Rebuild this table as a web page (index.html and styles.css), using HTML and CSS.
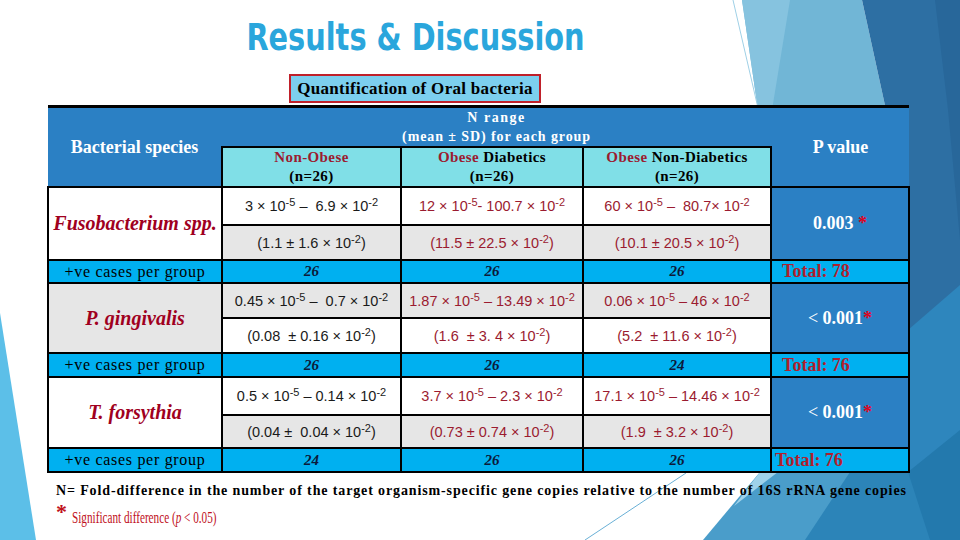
FILE: index.html
```html
<!DOCTYPE html>
<html>
<head>
<meta charset="utf-8">
<title>Results &amp; Discussion</title>
<link rel="stylesheet" href="styles.css">
</head>
<body>
<div class="slide">
  <svg class="bg" viewBox="0 0 960 540" preserveAspectRatio="none" aria-hidden="true">
    <polygon points="0,313 36,540 0,540" fill="#5cbfe8"/>
    <polygon points="742,0 862,0 886,110 758,110" fill="#71b6d6"/>
    <polygon points="742,0 790,0 772,110 758,110" fill="#86c3df"/>
    <polygon points="862,0 960,0 960,472 908,472 908,110 886,110" fill="#2d6fa3"/>
    <polygon points="935,0 960,0 960,240 948,110" fill="#28679a"/>
    <polygon points="908,330 960,285 960,472 908,472" fill="#2e86bd"/>
    <polygon points="703,540 760,472 960,472 960,540" fill="#4a9dca"/>
    <polygon points="805,540 850,472 960,472 960,540" fill="#2c84b8"/>
    <polygon points="908,472 960,430 960,540 930,540" fill="#2379ad"/>
    <polygon points="734,506 760,472 778,472" fill="#9fd2ea"/>
    <line x1="733" y1="0" x2="758" y2="108" stroke="#9fd0e6" stroke-width="1"/>
    <line x1="686" y1="473" x2="585" y2="540" stroke="#69b0d6" stroke-width="1"/>
  </svg>

  <main class="content">
    <header class="head">
      <h1 class="title"><span class="title-text">Results &amp; Discussion</span></h1>
      <div class="caption">Quantification of Oral bacteria</div>
    </header>

    <table class="tbl">
      <colgroup>
        <col class="c1"><col class="c2"><col class="c3"><col class="c4"><col class="c5">
      </colgroup>
      <thead>
        <tr class="hr1">
          <th rowspan="2" class="hd">Bacterial species</th>
          <th colspan="3" class="hd nr"><span class="spaced">N range</span><br>(mean ± SD) for each group</th>
          <th rowspan="2" class="hd">P value</th>
        </tr>
        <tr class="hr2">
          <th class="sub"><span class="red">Non-Obese</span><br>(n=26)</th>
          <th class="sub"><span class="red">Obese</span> Diabetics<br>(n=26)</th>
          <th class="sub"><span class="red">Obese</span> Non-Diabetics<br>(n=26)</th>
        </tr>
      </thead>
      <tbody>
        <tr class="ra">
          <td rowspan="2" class="sp white">Fusobacterium spp.</td>
          <td class="v white">3 × 10<sup>-5</sup> –&nbsp; 6.9 × 10<sup>-2</sup></td>
          <td class="v white dr">12 × 10<sup>-5</sup>- 100.7 × 10<sup>-2</sup></td>
          <td class="v white dr">60 × 10<sup>-5</sup> –&nbsp; 80.7× 10<sup>-2</sup></td>
          <td rowspan="2" class="pv"><b>0.003</b> <span class="star">*</span></td>
        </tr>
        <tr class="rb">
          <td class="v grey">(1.1 ± 1.6 × 10<sup>-2</sup>)</td>
          <td class="v grey dr">(11.5 ± 22.5 × 10<sup>-2</sup>)</td>
          <td class="v grey dr">(10.1 ± 20.5 × 10<sup>-2</sup>)</td>
        </tr>
        <tr class="rp1">
          <td class="pos">+ve cases per group</td>
          <td class="n">26</td><td class="n">26</td><td class="n">26</td>
          <td class="tot">Total: 78</td>
        </tr>

        <tr class="ra2">
          <td rowspan="2" class="sp grey">P. gingivalis</td>
          <td class="v grey">0.45 × 10<sup>-5</sup> –&nbsp; 0.7 × 10<sup>-2</sup></td>
          <td class="v grey dr">1.87 × 10<sup>-5</sup> – 13.49 × 10<sup>-2</sup></td>
          <td class="v grey dr">0.06 × 10<sup>-5</sup> – 46 × 10<sup>-2</sup></td>
          <td rowspan="2" class="pv">&lt; <b>0.001</b><span class="star">*</span></td>
        </tr>
        <tr class="rb">
          <td class="v white">(0.08&nbsp; ± 0.16 × 10<sup>-2</sup>)</td>
          <td class="v white dr">(1.6&nbsp; ± 3. 4 × 10<sup>-2</sup>)</td>
          <td class="v white dr">(5.2&nbsp; ± 11.6 × 10<sup>-2</sup>)</td>
        </tr>
        <tr class="rp">
          <td class="pos">+ve cases per group</td>
          <td class="n">26</td><td class="n">26</td><td class="n">24</td>
          <td class="tot">Total: 76</td>
        </tr>

        <tr class="ra3">
          <td rowspan="2" class="sp white">T. forsythia</td>
          <td class="v white">0.5 × 10<sup>-5</sup> – 0.14 × 10<sup>-2</sup></td>
          <td class="v white dr">3.7 × 10<sup>-5</sup> – 2.3 × 10<sup>-2</sup></td>
          <td class="v white dr">17.1 × 10<sup>-5</sup> – 14.46 × 10<sup>-2</sup></td>
          <td rowspan="2" class="pv">&lt; <b>0.001</b><span class="star">*</span></td>
        </tr>
        <tr class="rb3">
          <td class="v grey">(0.04 ±&nbsp; 0.04 × 10<sup>-2</sup>)</td>
          <td class="v grey dr">(0.73 ± 0.74 × 10<sup>-2</sup>)</td>
          <td class="v grey dr">(1.9&nbsp; ± 3.2 × 10<sup>-2</sup>)</td>
        </tr>
        <tr class="rp3">
          <td class="pos">+ve cases per group</td>
          <td class="n">24</td><td class="n">26</td><td class="n">26</td>
          <td class="tot tight">Total: 76</td>
        </tr>
      </tbody>
    </table>

    <p class="note">N= Fold-difference in the number of the target organism-specific gene copies relative to the number of 16S rRNA gene copies</p>
    <p class="sig"><span class="bigstar">*</span><span class="sig-text">Significant difference (<i>p</i> &lt; 0.05)</span></p>
  </main>
</div>
</body>
</html>
```

FILE: styles.css
```css
html, body {
  margin: 0;
  padding: 0;
  background: #fff;
}

.slide {
  position: relative;
  width: 960px;
  height: 540px;
  overflow: hidden;
  background: #fff;
}

.bg {
  position: absolute;
  left: 0;
  top: 0;
  width: 960px;
  height: 540px;
  z-index: 0;
}

.content {
  position: relative;
  z-index: 1;
  padding-left: 47px;
  display: flex;
  flex-direction: column;
}

.head {
  width: 736px;
  display: flex;
  flex-direction: column;
  align-items: center;
}

.title {
  margin: 18px 0 0 0;
  font-family: "Liberation Sans Narrow", "DejaVu Sans Condensed", "Liberation Sans", sans-serif;
  font-stretch: condensed;
  font-weight: bold;
  font-size: 37px;
  line-height: 40px;
  color: #2aa6dc;
}

.title-text {
  display: inline-block;
  transform: scaleX(0.865);
}

.caption {
  margin-top: 16px;
  box-sizing: border-box;
  height: 29px;
  padding: 0 6px;
  border: 2px solid #c0202a;
  background: #7ccfee;
  font-family: "Liberation Serif", serif;
  font-weight: bold;
  font-size: 17px;
  line-height: 25px;
  letter-spacing: 0.3px;
  color: #000;
}

.tbl {
  margin-top: 2px;
  width: 861px;
  table-layout: fixed;
  border-collapse: collapse;
  border-top: 3px solid #000;
  font-family: "Liberation Serif", serif;
}

.c1 { width: 174px; }
.c2 { width: 179px; }
.c3 { width: 182px; }
.c4 { width: 188px; }
.c5 { width: 138px; }

.hr1 { height: 39px; }
.hr2 { height: 37px; }
.ra { height: 38px; }
.ra2 { height: 35px; }
.ra3 { height: 38px; }
.rb { height: 35px; }
.rb3 { height: 33px; }
.rp1 { height: 22px; }
.rp { height: 24px; }
.rp3 { height: 24px; }

.tbl th,
.tbl td {
  padding: 0;
  text-align: center;
  vertical-align: middle;
}

.hd {
  background: #2b80c4;
  color: #fff;
  font-weight: bold;
  font-size: 18px;
  border: none;
}

.nr {
  font-size: 14px;
  line-height: 19px;
  letter-spacing: 0.9px;
}

.spaced {
  letter-spacing: 1.5px;
}

.sub {
  background: #80dfe7;
  border: 2px solid #000;
  color: #000;
  font-weight: bold;
  font-size: 15px;
  line-height: 19px;
  letter-spacing: 0.4px;
}

.red {
  color: #9b1b30;
}

.tbl td {
  border: 2px solid #000;
}

.white { background: #fff; }
.grey { background: #e6e6e6; }

.sp {
  color: #a0001e;
  font-weight: bold;
  font-style: italic;
  font-size: 20px;
}

.v {
  font-family: "Liberation Sans", Arial, sans-serif;
  font-size: 14.5px;
  color: #1a1a1a;
  white-space: nowrap;
}

.v.dr {
  color: #9b1b30;
}

.v sup {
  font-size: 11px;
  line-height: 0;
  vertical-align: 5px;
}

.pv {
  background: #2b80c4;
  color: #fff;
  font-size: 18px;
}

.star {
  color: #e0001b;
  font-weight: bold;
}

.rp1 td,
.rp td,
.rp3 td {
  background: #00b0f0;
}

.pos {
  font-size: 16px;
  letter-spacing: 0.7px;
  color: #000;
}

.n {
  font-weight: bold;
  font-style: italic;
  font-size: 15px;
  color: #0c1a3a;
}

.tbl td.tot {
  text-align: left;
  padding-left: 10px;
  font-weight: bold;
  font-size: 18px;
  color: #b01f2e;
}

.tbl td.tot.tight {
  padding-left: 3px;
}

.note {
  margin: 9px 0 0 9px;
  font-family: "Liberation Serif", serif;
  font-weight: bold;
  font-size: 14px;
  line-height: 18px;
  letter-spacing: 0.87px;
  color: #000;
  white-space: nowrap;
}

.sig {
  margin: 6px 0 0 9px;
  display: flex;
  align-items: flex-start;
  font-family: "Liberation Serif", serif;
  font-size: 16px;
  line-height: 20px;
  color: #c0101c;
}

.bigstar {
  margin-top: -2px;
  font-size: 22px;
  font-weight: bold;
  line-height: 16px;
  width: 16px;
}

.sig-text {
  display: inline-block;
  margin-top: 2px;
  transform: scaleX(0.7);
  transform-origin: left center;
  white-space: nowrap;
}
```
